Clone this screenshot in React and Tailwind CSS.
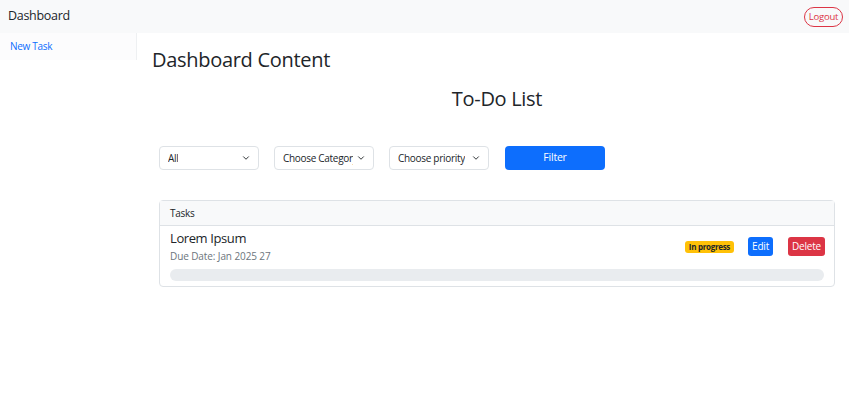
import { ChevronDown } from "lucide-react";

const font = { fontFamily: '"Open Sans", "Noto Sans", sans-serif' };

const Select = ({ label }) => (
  <div className="w-[100px] h-[24px] border border-[#dee2e6] rounded-[4px] bg-white flex items-center justify-between pl-[8px] pr-[7px] text-[10px] tracking-[-0.3px] text-[#212529]">
    <span className="whitespace-nowrap overflow-hidden min-w-0">{label}</span>
    <ChevronDown size={10} strokeWidth={2.2} className="shrink-0 ml-[3px]" />
  </div>
);

const App = () => {
  return (
    <div className="w-[849px] h-[397px] bg-white text-[#212529]" style={font}>
      <nav className="h-[33px] bg-[#f8f9fa] flex items-center justify-between px-[8px]">
        <span className="text-[12.5px] tracking-[-0.3px]">Dashboard</span>
        <button className="h-[20px] w-[39px] mr-[-2px] border border-[#dc3545] text-[#dc3545] rounded-full text-[9.5px] tracking-[-0.2px] leading-none">
          Logout
        </button>
      </nav>

      <div className="flex">
        <aside className="w-[137px] h-[27px] bg-[#fcfcfd] border-r border-[#eef0f2] pl-[10px] pt-[4px] leading-[14px]">
          <a className="text-[10px] tracking-[-0.3px] text-[#0d6efd]">New Task</a>
        </aside>

        <main className="flex-1 pl-[15px] pr-[14px]">
          <h1 className="text-[20px] tracking-[-0.3px] mt-[13px] leading-[28px]">Dashboard Content</h1>
          <h2 className="text-[20px] tracking-[-0.3px] text-center mt-[11px] leading-[28px] pl-[7px]">To-Do List</h2>

          <div className="flex items-center gap-[15px] ml-[7px] mt-[33px]">
            <Select label="All" />
            <Select label="Choose Category" />
            <Select label="Choose priority" />
            <button className="w-[100px] h-[24px] ml-[1px] bg-[#0d6efd] text-white rounded-[4px] text-[10.5px] tracking-[-0.2px]">
              Filter
            </button>
          </div>

          <div className="ml-[7px] mt-[30px] border border-[#dee2e6] rounded-[4px]">
            <div className="h-[25px] bg-[#f8f9fa] border-b border-[#dee2e6] flex items-center px-[10px] text-[10px] tracking-[-0.3px]">
              Tasks
            </div>
            <div className="px-[10px] pt-[2px] pb-[5px]">
              <div className="flex items-start justify-between">
                <div>
                  <div className="text-[13px] tracking-[-0.4px] font-medium leading-[20px]">Lorem Ipsum</div>
                  <div className="text-[10px] tracking-[-0.1px] text-[#6c757d] leading-[14px] mt-[1px]">Due Date: Jan 2025 27</div>
                </div>
                <div className="flex items-center gap-[14px] mt-[9px] mr-[-1px]">
                  <span className="bg-[#ffc107] text-[#212529] text-[8px] font-bold tracking-[-0.3px] px-[4px] h-[12px] leading-[12px] rounded-[3px]">
                    In progress
                  </span>
                  <button className="bg-[#0d6efd] text-white text-[10px] tracking-[-0.2px] h-[19px] px-[4px] rounded-[3px]">Edit</button>
                  <button className="bg-[#dc3545] text-white text-[10px] tracking-[-0.2px] h-[19px] px-[4px] rounded-[3px] ml-[1px]">Delete</button>
                </div>
              </div>
              <div className="h-[12px] bg-[#e9ecef] rounded-full mt-[6px]" />
            </div>
          </div>
        </main>
      </div>
    </div>
  );
};

export default App;
